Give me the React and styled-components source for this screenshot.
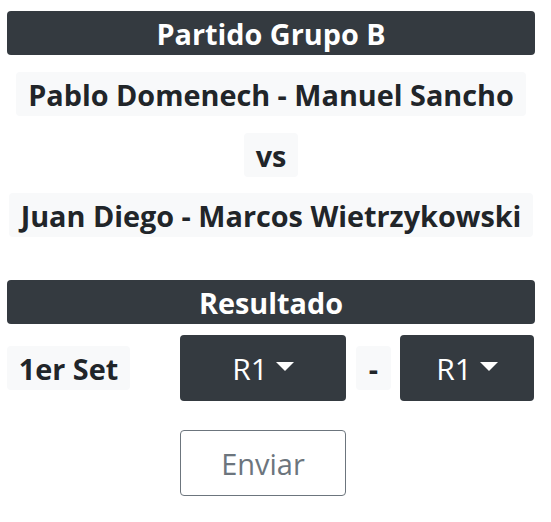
import React from "react";
import styled, { createGlobalStyle } from "styled-components";

const Global = createGlobalStyle`
  html, body { margin: 0; padding: 0; background: #fff; }
  body { font-family: "Open Sans", "Noto Sans", sans-serif; color: #212529; }
`;

const Page = styled.div`
  width: 528px;
  padding: 11px 0 0 7px;
  display: flex;
  flex-direction: column;
  align-items: center;
`;

const DarkBar = styled.div`
  width: 100%;
  height: 44px;
  box-sizing: border-box;
  background: #343a40;
  color: #fff;
  border-radius: 4px;
  display: flex;
  align-items: center;
  justify-content: center;
  font-size: 28.8px;
  font-weight: 700;
  margin-top: ${(p) => p.$mt || 0}px;
`;

const LightBox = styled.div`
  max-width: 100%;
  box-sizing: border-box;
  height: 44px;
  padding: 0 12px;
  background: #f8f9fa;
  border-radius: 4px;
  display: flex;
  align-items: center;
  justify-content: center;
  font-size: 28.8px;
  font-weight: 700;
  white-space: nowrap;
  margin-top: ${(p) => p.$mt || 0}px;
`;

const SetRow = styled.div`
  width: 100%;
  display: flex;
  align-items: center;
  margin-top: 11px;
`;

const Label = styled(LightBox)`
  width: 123px;
  padding: 0;
`;

const Dash = styled(LightBox)`
  width: 35px;
  padding: 0;
  margin: 0 9px 0 10px;
`;

const Drop = styled.button`
  width: ${(p) => p.$w}px;
  height: 66px;
  margin-left: ${(p) => p.$ml || 0}px;
  background: #343a40;
  color: #fff;
  border: none;
  border-radius: 4px;
  font-family: "Open Sans", "Noto Sans", sans-serif;
  font-size: 30px;
  display: flex;
  align-items: center;
  justify-content: center;
  padding: 0;
`;

const Caret = styled.span`
  width: 0;
  height: 0;
  margin-left: 0.255em;
  border-left: 0.3em solid transparent;
  border-right: 0.3em solid transparent;
  border-top: 0.3em solid #fff;
  margin-top: -4px;
`;

const SendRow = styled.div`
  width: 100%;
  display: flex;
  padding-left: 173px;
  box-sizing: border-box;
  margin-top: 29px;
`;

const Send = styled.button`
  width: 166px;
  height: 66px;
  background: #fff;
  color: #6c757d;
  border: 1px solid #6c757d;
  border-radius: 4px;
  font-family: "Open Sans", "Noto Sans", sans-serif;
  font-size: 29px;
  padding: 0;
`;

export default function App() {
  return (
    <>
      <Global />
      <Page>
        <DarkBar>Partido Grupo B</DarkBar>
        <LightBox $mt={17}>Pablo Domenech - Manuel Sancho</LightBox>
        <LightBox $mt={17}>vs</LightBox>
        <LightBox $mt={16}>Juan Diego - Marcos Wietrzykowski</LightBox>
        <DarkBar $mt={43}>Resultado</DarkBar>
        <SetRow>
          <Label>1er Set</Label>
          <Drop $w={166} $ml={50}>
            R1<Caret />
          </Drop>
          <Dash>-</Dash>
          <Drop $w={134}>
            R1<Caret />
          </Drop>
        </SetRow>
        <SendRow>
          <Send>Enviar</Send>
        </SendRow>
      </Page>
    </>
  );
}
